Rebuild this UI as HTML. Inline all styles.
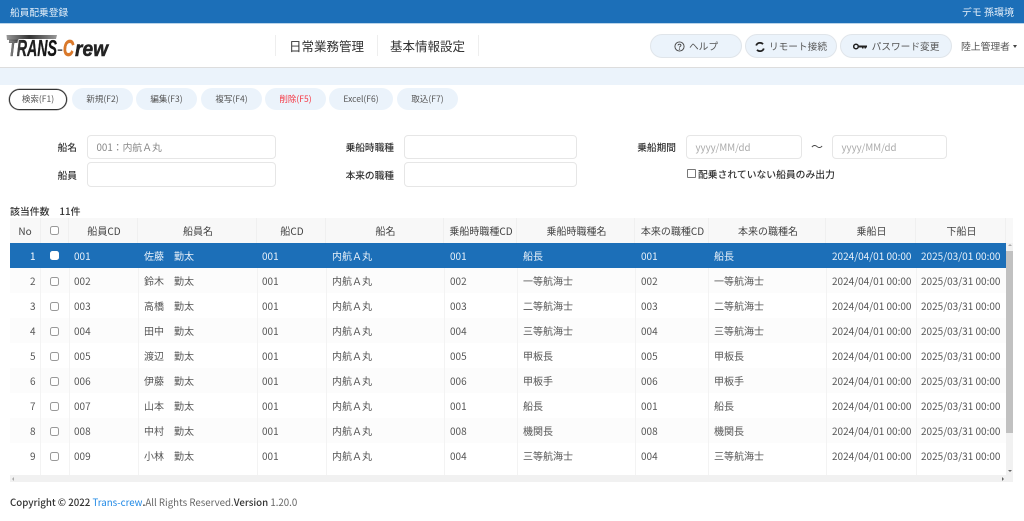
<!DOCTYPE html>
<html lang="ja"><head><meta charset="utf-8"><title>船員配乗登録</title>
<style>
*{box-sizing:border-box}
html,body{margin:0;padding:0;width:1024px;height:521px;overflow:hidden;background:#fff;font-family:"Noto Sans CJK JP","Liberation Sans",sans-serif;color:#444}
#w{position:absolute;left:0;top:0;width:1024px;height:521px;overflow:hidden;filter:blur(.3px)}
.a{position:absolute;white-space:nowrap}
.top{left:0;top:0;width:1024px;height:24px;background:#1c6fb8;border-bottom:1px solid #b9d4ea}
.nav{left:0;top:24px;width:1024px;height:44px;background:#fff;border-bottom:1px solid #ddd}
.band{left:0;top:68px;width:1024px;height:17px;background:#ebf3fb}
.btn{top:88px;height:22px;border-radius:11px;background:#ebf3fb;font-size:8.5px;line-height:22px;text-align:center;color:#555}
.hb{top:34px;height:24px;border-radius:12px;background:#ebf3fb;border:1px solid #e0e5ea;font-size:9.7px;line-height:22px;text-align:center;color:#555}
.inp{height:24px;border:1px solid #e6e6e6;border-radius:4px;background:#fff;font-size:9.8px;line-height:22px;padding-left:8.5px;color:#888}
.lb{font-size:9.7px;line-height:16px;text-align:right;color:#333;font-weight:500}
.cell{position:absolute;font-size:10px;line-height:25px;white-space:nowrap;color:#555}
.h{position:absolute;top:218px;height:25px;background:#f8f8f8;border-right:1px solid #f0f0f0;font-size:10px;line-height:25px;text-align:center;color:#444;white-space:nowrap;padding-left:2px}
.cb{position:absolute;width:9px;height:9px;border:1px solid #999;border-radius:2.5px;background:#fff}
.vl{position:absolute;width:1px;background:#f3f3f3;top:268px;height:207px}
.r{position:absolute;left:0;width:1024px;height:25px}
.r .cb{left:50px;top:9px}
.ar{position:absolute;width:0;height:0;border:2px solid transparent}
</style></head><body><div id="w">
<div class="a top"></div>
<div class="a" style="left:10px;top:4px;font-size:9.7px;line-height:16px;color:#e3eef8">船員配乗登録</div>
<div class="a" style="right:10px;top:4px;font-size:10px;line-height:16px;color:#e3eef8">デモ 孫環境</div>
<div class="a nav"></div>
<svg class="a" style="left:0;top:30px" width="115" height="32" viewBox="0 0 115 32">
<defs><linearGradient id="g" x1="0" y1="0" x2="1" y2="0"><stop offset="0" stop-color="#999"/><stop offset=".45" stop-color="#333"/><stop offset="1" stop-color="#999"/></linearGradient>
<linearGradient id="s" x1="0" y1="0" x2="1" y2="0"><stop offset="0" stop-color="#999"/><stop offset=".3" stop-color="#222"/><stop offset="1" stop-color="#111"/></linearGradient></defs>
<path d="M6.500 5H57L56 9H19L18 10H7Z" fill="url(#g)"/>
<text x="8" y="26" font-family="Liberation Sans" font-weight="700" font-style="italic" font-size="23" fill="url(#s)" textLength="49" lengthAdjust="spacingAndGlyphs" stroke="#222" stroke-width=".3">TRANS</text>
<text x="57" y="24" font-family="Liberation Sans" font-weight="700" font-size="14" fill="#555" textLength="6" lengthAdjust="spacingAndGlyphs">-</text>
<text x="63" y="26" font-family="Liberation Sans" font-weight="700" font-style="italic" font-size="23" fill="#d9782a" stroke="#d9782a" stroke-width=".7" textLength="11" lengthAdjust="spacingAndGlyphs">C</text>
<text x="75" y="26" font-family="Liberation Sans" font-weight="700" font-style="italic" font-size="21" fill="#222" stroke="#222" stroke-width=".5" textLength="33" lengthAdjust="spacingAndGlyphs">rew</text>
</svg>
<div class="a" style="left:275px;top:35px;width:1px;height:21px;background:#eee"></div>
<div class="a" style="left:377px;top:35px;width:1px;height:21px;background:#eee"></div>
<div class="a" style="left:478px;top:35px;width:1px;height:21px;background:#eee"></div>
<div class="a" style="left:289px;top:36px;font-size:12.5px;line-height:20px;color:#333">日常業務管理</div>
<div class="a" style="left:390px;top:36px;font-size:12.5px;line-height:20px;color:#333">基本情報設定</div>
<div class="a hb" style="left:650px;width:92px"><svg width="11" height="11" viewBox="0 0 12 12" style="vertical-align:-2px;margin-right:4px"><circle cx="6" cy="6" r="5" fill="none" stroke="#444" stroke-width="1"/><path d="M4.400 4.800C4.400 3 7.600 3 7.600 4.800C7.600 5.900 6 5.900 6 7.200" fill="none" stroke="#444"/><circle cx="6" cy="8.800" r=".7" fill="#444"/></svg>ヘルプ</div>
<div class="a hb" style="left:745px;width:92px"><svg width="10" height="10" viewBox="0 0 10 10" style="vertical-align:-1.5px;margin-right:4px"><path d="M1.200 3.500A4 4 0 0 1 8 2.200M8.800 6.500A4 4 0 0 1 2 7.800" fill="none" stroke="#222" stroke-width="1.800"/></svg>リモート接続</div>
<div class="a hb" style="left:840px;width:112px"><svg width="14" height="9" viewBox="0 0 14 9" style="vertical-align:-.5px;margin-right:5px"><circle cx="3" cy="4.500" r="2.300" fill="none" stroke="#222" stroke-width="1.500"/><path d="M5.500 3.500H14V5.500H13V6.500H11.500V5.500H10.500V6.500H9V5.500H5.500Z" fill="#222"/></svg>パスワード変更</div>
<div class="a" style="left:961px;top:38px;font-size:9.8px;line-height:16px;color:#555">陸上管理者</div>
<div class="a" style="left:1013px;top:45px;width:0;height:0;border:2.500px solid transparent;border-top:3px solid #444;border-bottom:0"></div>
<div class="a band"></div>

<div class="a btn" style="left:9px;width:58px;height:21px;top:89px;background:#fff;border:1px solid #333;line-height:19px;box-shadow:0 0 0 .5px #999">検索(F1)</div>
<div class="a btn" style="left:72px;width:61px">新規(F2)</div>
<div class="a btn" style="left:136px;width:61px">編集(F3)</div>
<div class="a btn" style="left:201px;width:61px">複写(F4)</div>
<div class="a btn" style="left:265px;width:61px;color:#f5333f">削除(F5)</div>
<div class="a btn" style="left:329px;width:64px">Excel(F6)</div>
<div class="a btn" style="left:397px;width:61px">取込(F7)</div>

<div class="a lb" style="left:40px;width:37px;top:139px">船名</div>
<div class="a inp" style="left:87px;top:135px;width:189px">001：内航Ａ丸</div>
<div class="a lb" style="left:40px;width:37px;top:167px">船員</div>
<div class="a inp" style="left:87px;top:162px;width:189px;height:25px"></div>
<div class="a lb" style="left:330px;width:64px;top:139px">乗船時職種</div>
<div class="a inp" style="left:404px;top:135px;width:173px"></div>
<div class="a lb" style="left:330px;width:64px;top:167px">本来の職種</div>
<div class="a inp" style="left:404px;top:162px;width:173px;height:25px"></div>
<div class="a lb" style="left:625px;width:51px;top:139px">乗船期間</div>
<div class="a inp" style="left:686px;top:135px;width:116px;color:#aaa;font-size:9.7px">yyyy/MM/dd</div>
<div class="a" style="left:811px;top:138px;font-size:12px;line-height:18px;color:#444">～</div>
<div class="a inp" style="left:832px;top:135px;width:115px;color:#aaa;font-size:9.7px">yyyy/MM/dd</div>
<div class="cb" style="left:687px;top:169px;border-radius:1px;border-color:#777"></div>
<div class="a" style="left:698px;top:166px;font-size:9.8px;line-height:16px;color:#333;font-weight:500">配乗されていない船員のみ出力</div>
<div class="a" style="left:10px;top:204px;font-size:9.9px;line-height:15px;color:#333;font-weight:500">該当件数　11件</div>

<div class="a" style="left:1006px;top:218px;width:7px;height:25px;background:#f8f8f8"></div>
<div class="h" style="left:10px;width:31px;padding-left:0">No</div>
<div class="h" style="left:41px;width:28px"></div>
<div class="h" style="left:69px;width:69px">船員CD</div>
<div class="h" style="left:138px;width:119px">船員名</div>
<div class="h" style="left:257px;width:69px">船CD</div>
<div class="h" style="left:326px;width:118px">船名</div>
<div class="h" style="left:444px;width:73px">乗船時職種CD</div>
<div class="h" style="left:517px;width:118px">乗船時職種名</div>
<div class="h" style="left:635px;width:74px">本来の職種CD</div>
<div class="h" style="left:709px;width:117px">本来の職種名</div>
<div class="h" style="left:826px;width:90px">乗船日</div>
<div class="h" style="left:916px;width:90px">下船日</div>
<div class="cb" style="left:50px;top:226px"></div>

<div class="a" style="left:10px;top:243px;width:996px;height:25px;background:#1c6fb8"></div>
<div class="a" style="left:10px;top:268px;width:996px;height:25px;background:#fcfcfc"></div>
<div class="a" style="left:10px;top:318px;width:996px;height:25px;background:#fcfcfc"></div>
<div class="a" style="left:10px;top:368px;width:996px;height:25px;background:#fcfcfc"></div>
<div class="a" style="left:10px;top:418px;width:996px;height:25px;background:#fcfcfc"></div>
<div class="vl" style="left:40px"></div><div class="vl" style="left:69px"></div><div class="vl" style="left:138px"></div><div class="vl" style="left:257px"></div><div class="vl" style="left:326px"></div><div class="vl" style="left:444px"></div><div class="vl" style="left:517px"></div><div class="vl" style="left:635px"></div><div class="vl" style="left:708px"></div><div class="vl" style="left:826px"></div><div class="vl" style="left:916px"></div>

<div class="r" style="top:243px">
<div class="cell" style="left:30px;color:#fff">1</div><div class="cb" style="top:8px;border-color:#fff"></div><div class="cell" style="left:74px;color:#e8f1f9">001</div><div class="cell" style="left:144px;color:#e8f1f9">佐藤　勤太</div><div class="cell" style="left:262px;color:#e8f1f9">001</div><div class="cell" style="left:332px;color:#e8f1f9">内航Ａ丸</div><div class="cell" style="left:450px;color:#e8f1f9">001</div><div class="cell" style="left:523px;color:#e8f1f9">船長</div><div class="cell" style="left:641px;color:#e8f1f9">001</div><div class="cell" style="left:714px;color:#e8f1f9">船長</div><div class="cell" style="left:832px;color:#e8f1f9">2024/04/01 00:00</div><div class="cell" style="left:921px;color:#e8f1f9">2025/03/01 00:00</div>
</div>
<div class="r" style="top:268px">
<div class="cell" style="left:30px">2</div><div class="cb"></div><div class="cell" style="left:74px">002</div><div class="cell" style="left:144px">鈴木　勤太</div><div class="cell" style="left:262px">001</div><div class="cell" style="left:332px">内航Ａ丸</div><div class="cell" style="left:450px">002</div><div class="cell" style="left:523px">一等航海士</div><div class="cell" style="left:641px">002</div><div class="cell" style="left:714px">一等航海士</div><div class="cell" style="left:832px">2024/04/01 00:00</div><div class="cell" style="left:921px">2025/03/31 00:00</div>
</div>
<div class="r" style="top:293px">
<div class="cell" style="left:30px">3</div><div class="cb"></div><div class="cell" style="left:74px">003</div><div class="cell" style="left:144px">高橋　勤太</div><div class="cell" style="left:262px">001</div><div class="cell" style="left:332px">内航Ａ丸</div><div class="cell" style="left:450px">003</div><div class="cell" style="left:523px">二等航海士</div><div class="cell" style="left:641px">003</div><div class="cell" style="left:714px">二等航海士</div><div class="cell" style="left:832px">2024/04/01 00:00</div><div class="cell" style="left:921px">2025/03/31 00:00</div>
</div>
<div class="r" style="top:318px">
<div class="cell" style="left:30px">4</div><div class="cb"></div><div class="cell" style="left:74px">004</div><div class="cell" style="left:144px">田中　勤太</div><div class="cell" style="left:262px">001</div><div class="cell" style="left:332px">内航Ａ丸</div><div class="cell" style="left:450px">004</div><div class="cell" style="left:523px">三等航海士</div><div class="cell" style="left:641px">004</div><div class="cell" style="left:714px">三等航海士</div><div class="cell" style="left:832px">2024/04/01 00:00</div><div class="cell" style="left:921px">2025/03/31 00:00</div>
</div>
<div class="r" style="top:343px">
<div class="cell" style="left:30px">5</div><div class="cb"></div><div class="cell" style="left:74px">005</div><div class="cell" style="left:144px">渡辺　勤太</div><div class="cell" style="left:262px">001</div><div class="cell" style="left:332px">内航Ａ丸</div><div class="cell" style="left:450px">005</div><div class="cell" style="left:523px">甲板長</div><div class="cell" style="left:641px">005</div><div class="cell" style="left:714px">甲板長</div><div class="cell" style="left:832px">2024/04/01 00:00</div><div class="cell" style="left:921px">2025/03/31 00:00</div>
</div>
<div class="r" style="top:368px">
<div class="cell" style="left:30px">6</div><div class="cb"></div><div class="cell" style="left:74px">006</div><div class="cell" style="left:144px">伊藤　勤太</div><div class="cell" style="left:262px">001</div><div class="cell" style="left:332px">内航Ａ丸</div><div class="cell" style="left:450px">006</div><div class="cell" style="left:523px">甲板手</div><div class="cell" style="left:641px">006</div><div class="cell" style="left:714px">甲板手</div><div class="cell" style="left:832px">2024/04/01 00:00</div><div class="cell" style="left:921px">2025/03/31 00:00</div>
</div>
<div class="r" style="top:393px">
<div class="cell" style="left:30px">7</div><div class="cb"></div><div class="cell" style="left:74px">007</div><div class="cell" style="left:144px">山本　勤太</div><div class="cell" style="left:262px">001</div><div class="cell" style="left:332px">内航Ａ丸</div><div class="cell" style="left:450px">001</div><div class="cell" style="left:523px">船長</div><div class="cell" style="left:641px">001</div><div class="cell" style="left:714px">船長</div><div class="cell" style="left:832px">2024/04/01 00:00</div><div class="cell" style="left:921px">2025/03/31 00:00</div>
</div>
<div class="r" style="top:418px">
<div class="cell" style="left:30px">8</div><div class="cb"></div><div class="cell" style="left:74px">008</div><div class="cell" style="left:144px">中村　勤太</div><div class="cell" style="left:262px">001</div><div class="cell" style="left:332px">内航Ａ丸</div><div class="cell" style="left:450px">008</div><div class="cell" style="left:523px">機関長</div><div class="cell" style="left:641px">008</div><div class="cell" style="left:714px">機関長</div><div class="cell" style="left:832px">2024/04/01 00:00</div><div class="cell" style="left:921px">2025/03/31 00:00</div>
</div>
<div class="r" style="top:443px">
<div class="cell" style="left:30px">9</div><div class="cb"></div><div class="cell" style="left:74px">009</div><div class="cell" style="left:144px">小林　勤太</div><div class="cell" style="left:262px">001</div><div class="cell" style="left:332px">内航Ａ丸</div><div class="cell" style="left:450px">004</div><div class="cell" style="left:523px">三等航海士</div><div class="cell" style="left:641px">004</div><div class="cell" style="left:714px">三等航海士</div><div class="cell" style="left:832px">2024/04/01 00:00</div><div class="cell" style="left:921px">2025/03/31 00:00</div>
</div>

<div class="a" style="left:1006px;top:243px;width:7px;height:232px;background:#f1f1f1"></div>
<div class="a" style="left:1006px;top:251px;width:7px;height:182px;background:#c1c1c1"></div>
<div class="a" style="left:10px;top:475px;width:1003px;height:7px;background:#f1f1f1"></div>
<div class="ar" style="left:1007.500px;top:244px;border-bottom-color:#aaa;border-top:0"></div>
<div class="ar" style="left:1007.500px;top:470px;border-top-color:#666;border-bottom:0"></div>
<div class="ar" style="left:12px;top:476.500px;border-right-color:#aaa;border-left:0"></div>
<div class="ar" style="left:1002px;top:476.500px;border-left-color:#666;border-right:0"></div>

<div class="a" style="left:10px;top:494px;font-size:9.7px;line-height:16px;color:#666"><span style="color:#333;font-weight:500">Copyright © 2022 </span><span style="color:#1e88e5">Trans-crew</span><span style="color:#333;font-weight:500">.</span>All Rights Reserved.<span style="color:#333;font-weight:500">Version</span> 1.20.0</div>
</div></body></html>
